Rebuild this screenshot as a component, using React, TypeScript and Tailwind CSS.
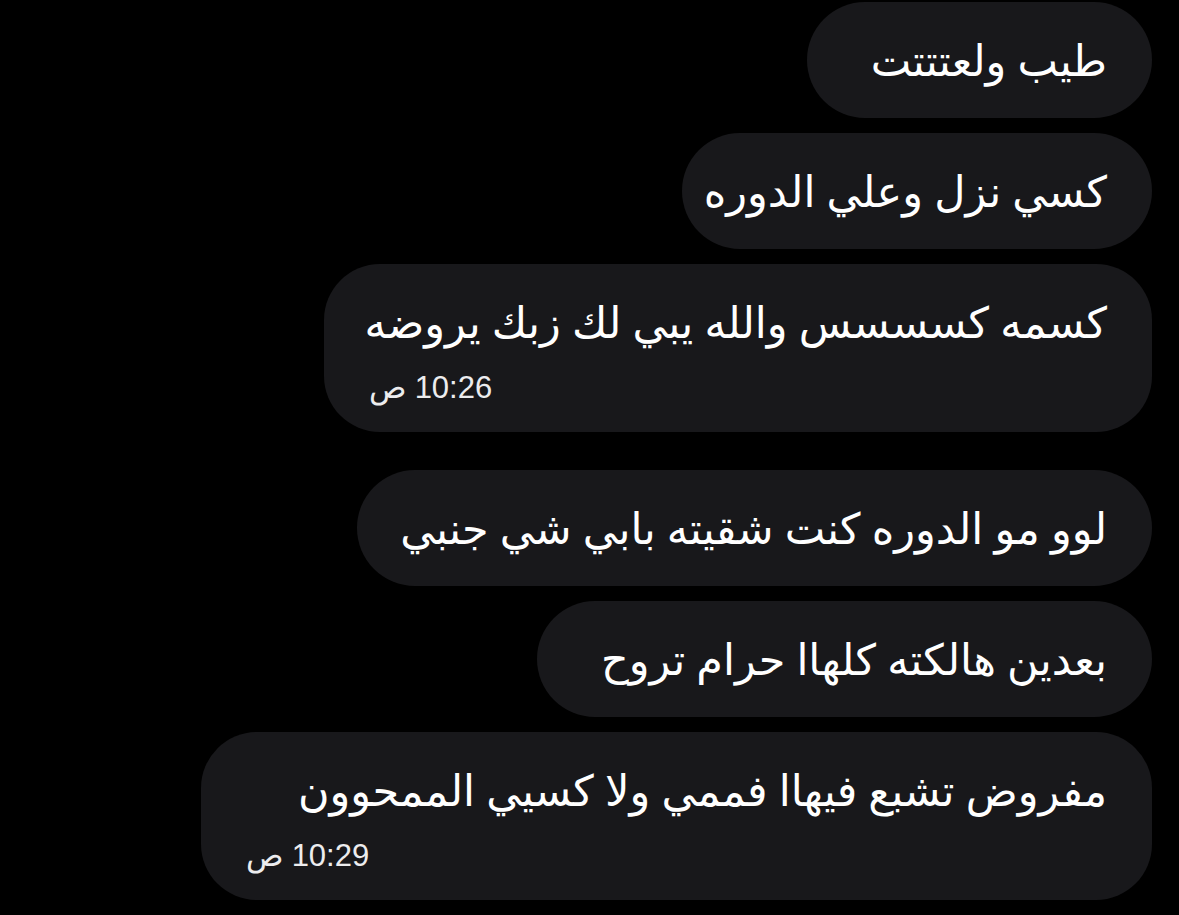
const MESSAGES: { text: string; time?: string; w: string }[] = [
  { text: 'طيب ولعتتتت', w: 'w-[345px]' },
  { text: 'كسي نزل وعلي الدوره', w: 'w-[470px]' },
  { text: 'كسمه كسسسس والله يبي لك زبك يروضه', time: '10:26', w: 'w-[828px]' },
  { text: 'لوو مو الدوره كنت شقيته بابي شي جنبي', w: 'w-[795px]' },
  { text: 'بعدين هالكته كلهاا حرام تروح', w: 'w-[615px]' },
  { text: 'مفروض تشبع فيهاا فممي ولا كسيي الممحوون', time: '10:29', w: 'w-[951px]' },
];

export default function App() {
  return (
    <div
      dir="rtl"
      className="w-[1179px] h-[915px] bg-black overflow-hidden pt-[2px] pr-[27px] flex flex-col items-start"
      style={{ fontFamily: '"Noto Sans", "DejaVu Sans", sans-serif' }}
    >
      {MESSAGES.map((m, i) => (
        <div
          key={i}
          className={`${m.w} bg-[#18181b] text-white px-[45px] flex flex-col ${
            m.time ? 'rounded-[56px] pt-[30px] pb-[24px] mb-[38px]' : 'rounded-full py-[30px] mb-[15px]'
          }`}
        >
          <div className="text-[43px] leading-[56px] whitespace-nowrap">{m.text}</div>
          {m.time && (
            <div
              className="self-end mt-[18px] text-[31px] leading-[40px] text-[#ececee] whitespace-nowrap"
              style={{ fontFamily: '"Liberation Sans", "Noto Sans", sans-serif' }}
            >
              {m.time} ص
            </div>
          )}
        </div>
      ))}
    </div>
  );
}
